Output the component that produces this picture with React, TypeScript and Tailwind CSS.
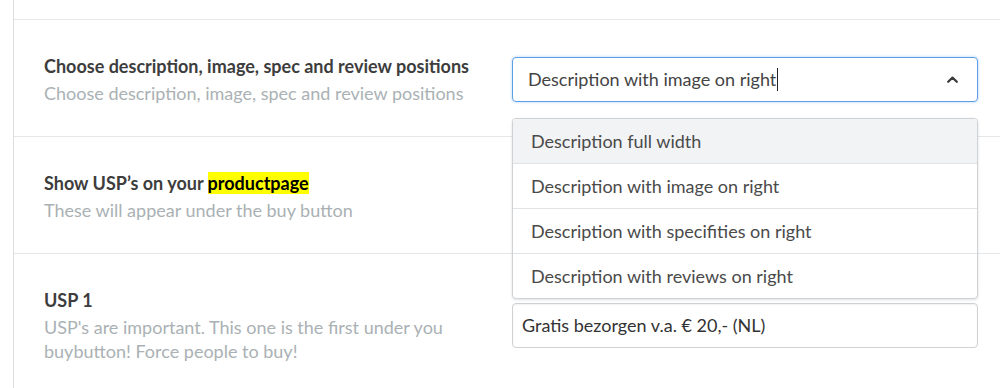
const options = [
  'Description full width',
  'Description with image on right',
  'Description with specifities on right',
  'Description with reviews on right',
]

function Row({ label, desc, children }: { label: React.ReactNode; desc: React.ReactNode; children: React.ReactNode }) {
  return (
    <div className="flex items-center border-b border-[#e6e7e8] pt-[34px] pb-[31px] pl-[30px] pr-[22px]">
      <div className="min-w-0 flex-1 pr-[28px]">
        <div className="text-[18px] font-bold leading-6 text-[#3d3d3d]">{label}</div>
        <div className="mt-[3px] text-[18px] leading-6 text-[#aab1b4]">{desc}</div>
      </div>
      <div className="relative w-[466px] shrink-0">{children}</div>
    </div>
  )
}

export default function App() {
  return (
    <div className="min-h-screen bg-white font-['Lato','Noto_Sans',sans-serif]">
      <div className="ml-[13px] min-h-screen border-l border-[#dcdddf]">
        <div className="h-[20px] border-b border-[#e6e7e8]" />

        <Row
          label="Choose description, image, spec and review positions"
          desc="Choose description, image, spec and review positions"
        >
          <div className="flex h-[45px] items-center justify-between rounded-[4px] border border-[#5c9ee6] pl-[15px] pr-[19px] text-[18px] text-[#444] shadow-[0_0_3px_rgba(74,144,226,0.45)]">
            <span className="flex items-center">
              Description with image on right
              <span className="ml-px inline-block h-[23px] w-px bg-[#222]" />
            </span>
            <svg width="11" height="7" viewBox="0 0 11 7" fill="none">
              <polyline points="1.2,5.8 5.5,1.6 9.8,5.8" stroke="#3a3a3a" strokeWidth="2.2" strokeLinecap="round" strokeLinejoin="round" />
            </svg>
          </div>
          <div className="absolute left-0 right-0 top-[61px] z-10 overflow-hidden rounded-[4px] border border-[#cfd2d4] bg-white shadow-[0_1px_3px_rgba(0,0,0,0.12)]">
            {options.map((o, i) => (
              <div
                key={o}
                className={`flex items-center pl-[18px] text-[18px] text-[#4a4a4a] ${
                  i === options.length - 1 ? 'h-[44px]' : 'h-[45px] border-b border-[#e1e4e6]'
                } ${i === 0 ? 'bg-[#f2f3f5]' : ''}`}
              >
                {o}
              </div>
            ))}
          </div>
        </Row>

        <Row
          label={
            <>
              Show USP’s on your <span className="bg-[#ffff00] text-black">productpage</span>
            </>
          }
          desc="These will appear under the buy button"
        >
          <div className="h-[45px]" />
        </Row>

        <Row
          label="USP 1"
          desc="USP's are important. This one is the first under you buybutton! Force people to buy!"
        >
          <div className="flex h-[45px] items-center rounded-[4px] border border-[#cfd2d4] pl-[9px] text-[18px] text-[#333] shadow-[inset_0_1px_2px_rgba(0,0,0,0.06)]">
            Gratis bezorgen v.a. € 20,- (NL)
          </div>
        </Row>
      </div>
    </div>
  )
}
